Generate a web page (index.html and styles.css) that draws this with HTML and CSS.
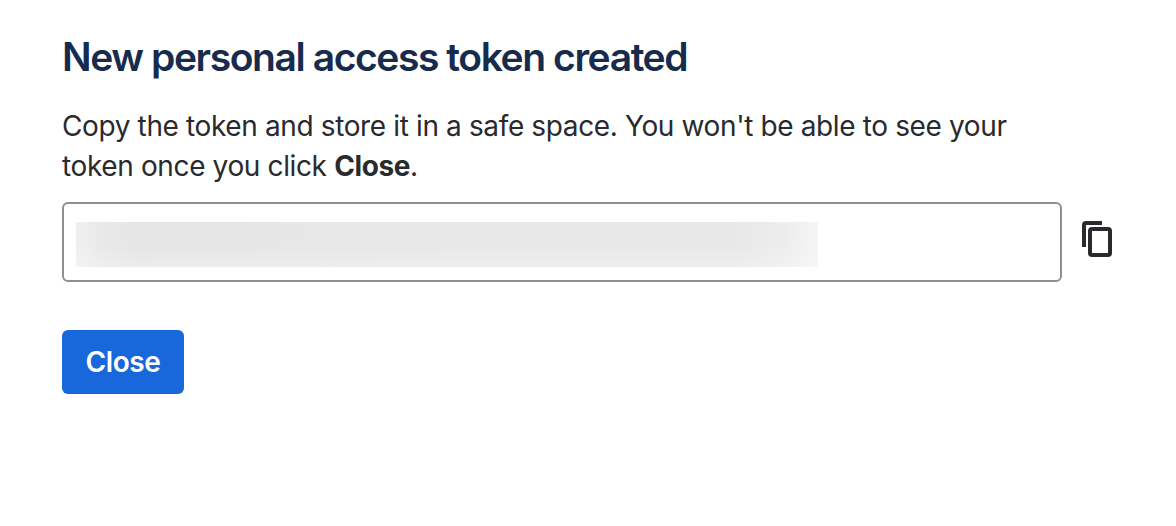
FILE: index.html
```
<!DOCTYPE html>
<html lang="en">
  <head>
    <meta charset="UTF-8" />
    <meta name="viewport" content="width=device-width, initial-scale=1.0" />
    <title>New personal access token created</title>
    <link rel="stylesheet" href="styles.css">
  </head>
  <body>
    <div class="token-dialog">
      <h1>New personal access token created</h1>
      <p>
        Copy the token and store it in a safe space. You won't be able to see
        your token once you click <strong>Close</strong>.
      </p>

      <div class="token-row">
        <div class="token-field">
          <div class="token-value"></div>
        </div>
        <button type="button" class="copy-btn" aria-label="Copy token">
          <svg width="30" height="36" viewBox="0 0 30 36" fill="none" stroke="currentColor" stroke-width="4">
            <path d="M2 26V4a2 2 0 0 1 2-2h16" />
            <rect x="8" y="8" width="20" height="26" rx="2" />
          </svg>
        </button>
      </div>

      <button type="button" class="close-btn">Close</button>
    </div>
  </body>
</html>
```
FILE: styles.css
```
* {
  box-sizing: border-box;
}
body {
  margin: 0;
  background-color: #ffffff;
  color: #292a2e;
  font-family: Inter, sans-serif;
}
.token-dialog {
  padding: 33px 64px 0 62px;
}
h1 {
  margin: 0 0 25px;
  color: #172b4d;
  font-size: 39px;
  font-weight: 560;
  line-height: 48px;
  letter-spacing: -1.41px;
}
p {
  max-width: 1000px;
  margin: 0 0 16px;
  font-size: 28px;
  line-height: 40px;
  letter-spacing: -0.37px;
}
strong {
  font-weight: 700;
}
.token-row {
  display: flex;
  gap: 20px;
  margin-bottom: 48px;
}
.token-field {
  width: 1000px;
  height: 80px;
  padding: 18px 12px;
  border: 2px solid #8b8f96;
  border-radius: 6px;
}
/* hidden token */
.token-value {
  width: 742px;
  height: 45px;
  background:
    linear-gradient(to right, rgba(255, 255, 255, 0.4), rgba(255, 255, 255, 0.12) 4%, transparent 9%, transparent 88%, rgba(255, 255, 255, 0.2) 95%, rgba(255, 255, 255, 0.55)),
    linear-gradient(to bottom, transparent, transparent 50%, rgba(255, 255, 255, 0.25)),
    linear-gradient(to right, #e5e5e5, #e8e8e8 50%, #e8e8e8);
}
.copy-btn {
  width: 30px;
  height: 36px;
  margin-top: 19px;
  padding: 0;
  border: none;
  background: none;
  color: #292a2e;
  cursor: pointer;
}
.copy-btn svg {
  display: block;
}
.close-btn {
  display: block;
  width: 122px;
  height: 64px;
  padding: 0;
  border: none;
  border-radius: 6px;
  background-color: #1868db;
  color: #ffffff;
  font-family: inherit;
  font-size: 28px;
  font-weight: 560;
  letter-spacing: -0.4px;
  cursor: pointer;
}
```
